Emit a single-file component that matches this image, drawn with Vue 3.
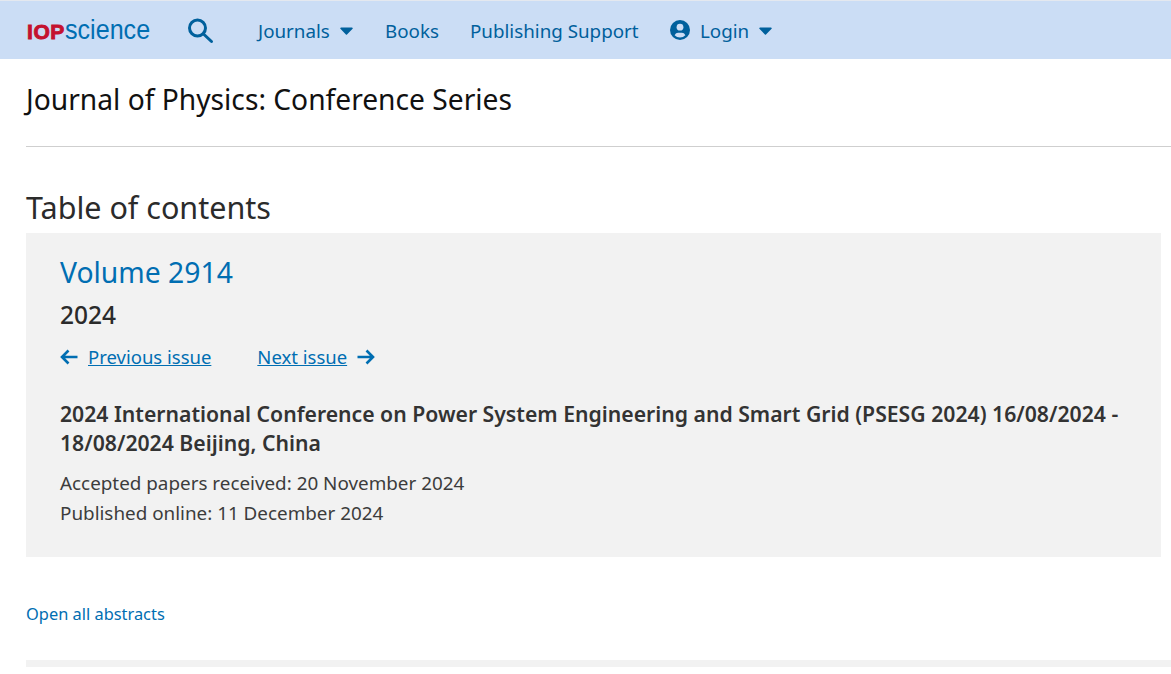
<template>
  <div class="page">
    <header class="nav">
      <a class="logo"><span class="iop">IOP</span><span class="sci">science</span></a>
      <svg class="search" width="28" height="28" viewBox="0 0 28 28" fill="none" stroke="#00609c" stroke-width="3">
        <circle cx="10.500" cy="12" r="8" />
        <path d="M16.500 18l8 7.500" stroke-linecap="round" />
      </svg>
      <a class="item journals">Journals<svg class="caret" width="13" height="8" viewBox="0 0 13 8"><path d="M1 .5h11a.8.8 0 0 1 .6 1.300L7 7.400a.8.8 0 0 1-1.100 0L.4 1.800A.8.8 0 0 1 1 .5z" fill="#00609c" /></svg></a>
      <a class="item books">Books</a>
      <a class="item support">Publishing Support</a>
      <a class="item login">
        <svg class="user" width="20" height="20" viewBox="0 0 20 20"><circle cx="10" cy="10" r="10" fill="#00609c" /><circle cx="10" cy="7.200" r="3.400" fill="#cbddf5" /><path d="M4.600 15.300c.8-1.900 2.200-2.600 3.400-2.600h4c1.200 0 2.600.7 3.400 2.600A7.500 7.500 0 0 1 10 17.600a7.500 7.500 0 0 1-5.400-2.300z" fill="#cbddf5" /></svg>
        Login<svg class="caret" width="13" height="8" viewBox="0 0 13 8"><path d="M1 .5h11a.8.8 0 0 1 .6 1.300L7 7.400a.8.8 0 0 1-1.100 0L.4 1.800A.8.8 0 0 1 1 .5z" fill="#00609c" /></svg>
      </a>
    </header>
    <main class="content">
      <div class="journal">Journal of Physics: Conference Series</div>
      <h1 class="toc">Table of contents</h1>
      <section class="panel">
        <h2 class="volume">Volume 2914</h2>
        <div class="year">2024</div>
        <div class="issues">
          <span class="issue">
            <svg width="18" height="16" viewBox="0 0 18 16" fill="none" stroke="#006eb2" stroke-width="2.600"><path d="M17.500 8H2M8.500 1.500L2 8l6.500 6.500" /></svg>
            <a>Previous issue</a>
          </span>
          <span class="issue">
            <a>Next issue</a>
            <svg width="18" height="16" viewBox="0 0 18 16" fill="none" stroke="#006eb2" stroke-width="2.600"><path d="M.5 8H16M9.500 1.500L16 8l-6.500 6.500" /></svg>
          </span>
        </div>
        <h3 class="conf">2024 International Conference on Power System Engineering and Smart Grid (PSESG 2024) 16/08/2024 - 18/08/2024 Beijing, China</h3>
        <p class="meta">Accepted papers received: 20 November 2024</p>
        <p class="meta">Published online: 11 December 2024</p>
      </section>
      <a class="open">Open all abstracts</a>
      <div class="bar"></div>
    </main>
  </div>
</template>

<script setup>
</script>

<style>
html, body { margin: 0; background: #fff; overflow: hidden; }
</style>

<style scoped>
.page { width: 1171px; height: 674px; overflow: hidden; font-family: "Noto Sans", sans-serif; color: #2b2b2b; }
.nav { height: 58px; margin-top: 1px; background: #cbddf5; display: flex; align-items: center; padding-left: 26px; box-sizing: border-box; box-shadow: 0 -1px 0 #e4e8ef; }
.logo { display: flex; align-items: baseline; width: 161px; line-height: 30px; margin-top: 1px; }
.iop { font-family: "Liberation Sans", sans-serif; font-weight: 700; font-size: 21px; color: #c4122f; letter-spacing: 0.6px; -webkit-text-stroke: 0.9px #c4122f; width: 39px; padding-left: 1px; box-sizing: border-box; }
.sci { font-family: "Liberation Sans", sans-serif; color: #006eb2; font-size: 27px; display: inline-block; transform-origin: left; transform: scaleX(0.93); }
.search { width: 28px; height: 28px; margin-right: 43px; }
.item { color: #00609c; font-size: 18.800px; line-height: 30px; display: flex; align-items: center; padding-top: 1px; }
.journals { width: 127px; }
.books { width: 85px; }
.support { width: 200px; }
.caret { margin-left: 10px; }
.user { margin-right: 10px; margin-top: -2px; }
.content { padding: 0 0 0 26px; }
.journal { font-size: 28.200px; line-height: 38px; color: #111; padding: 21px 0 28px; border-bottom: 1px solid #cfcfcf; }
.toc { margin: 0; padding-top: 40px; font-size: 30.500px; line-height: 40px; font-weight: 400; color: #2b2b2b; height: 46px; }
.panel { width: 1135px; box-sizing: border-box; height: 324px; padding: 19px 34px; background: #f2f2f2; }
.volume { margin: 0; font-size: 28.300px; line-height: 40px; font-weight: 400; color: #006eb2; }
.year { margin-top: 7px; font-size: 24.500px; line-height: 32px; font-weight: 500; color: #2b2b2b; }
.issues { display: flex; gap: 46px; margin-top: 11px; font-size: 18.500px; line-height: 30px; color: #006eb2; }
.issue { display: flex; align-items: center; gap: 10px; }
.issue a { text-decoration: underline; }
.conf { margin: 27px 0 0; font-size: 21.200px; line-height: 29px; font-weight: 600; color: #333; }
.meta { margin: 0; font-size: 18.850px; line-height: 30px; color: #3c3c3c; }
.conf + .meta { margin-top: 10.500px; }
.open { display: block; margin-top: 44px; font-size: 16.400px; line-height: 26px; color: #006eb2; }
.bar { margin-top: 33px; height: 7px; background: #f2f2f2; }
</style>
